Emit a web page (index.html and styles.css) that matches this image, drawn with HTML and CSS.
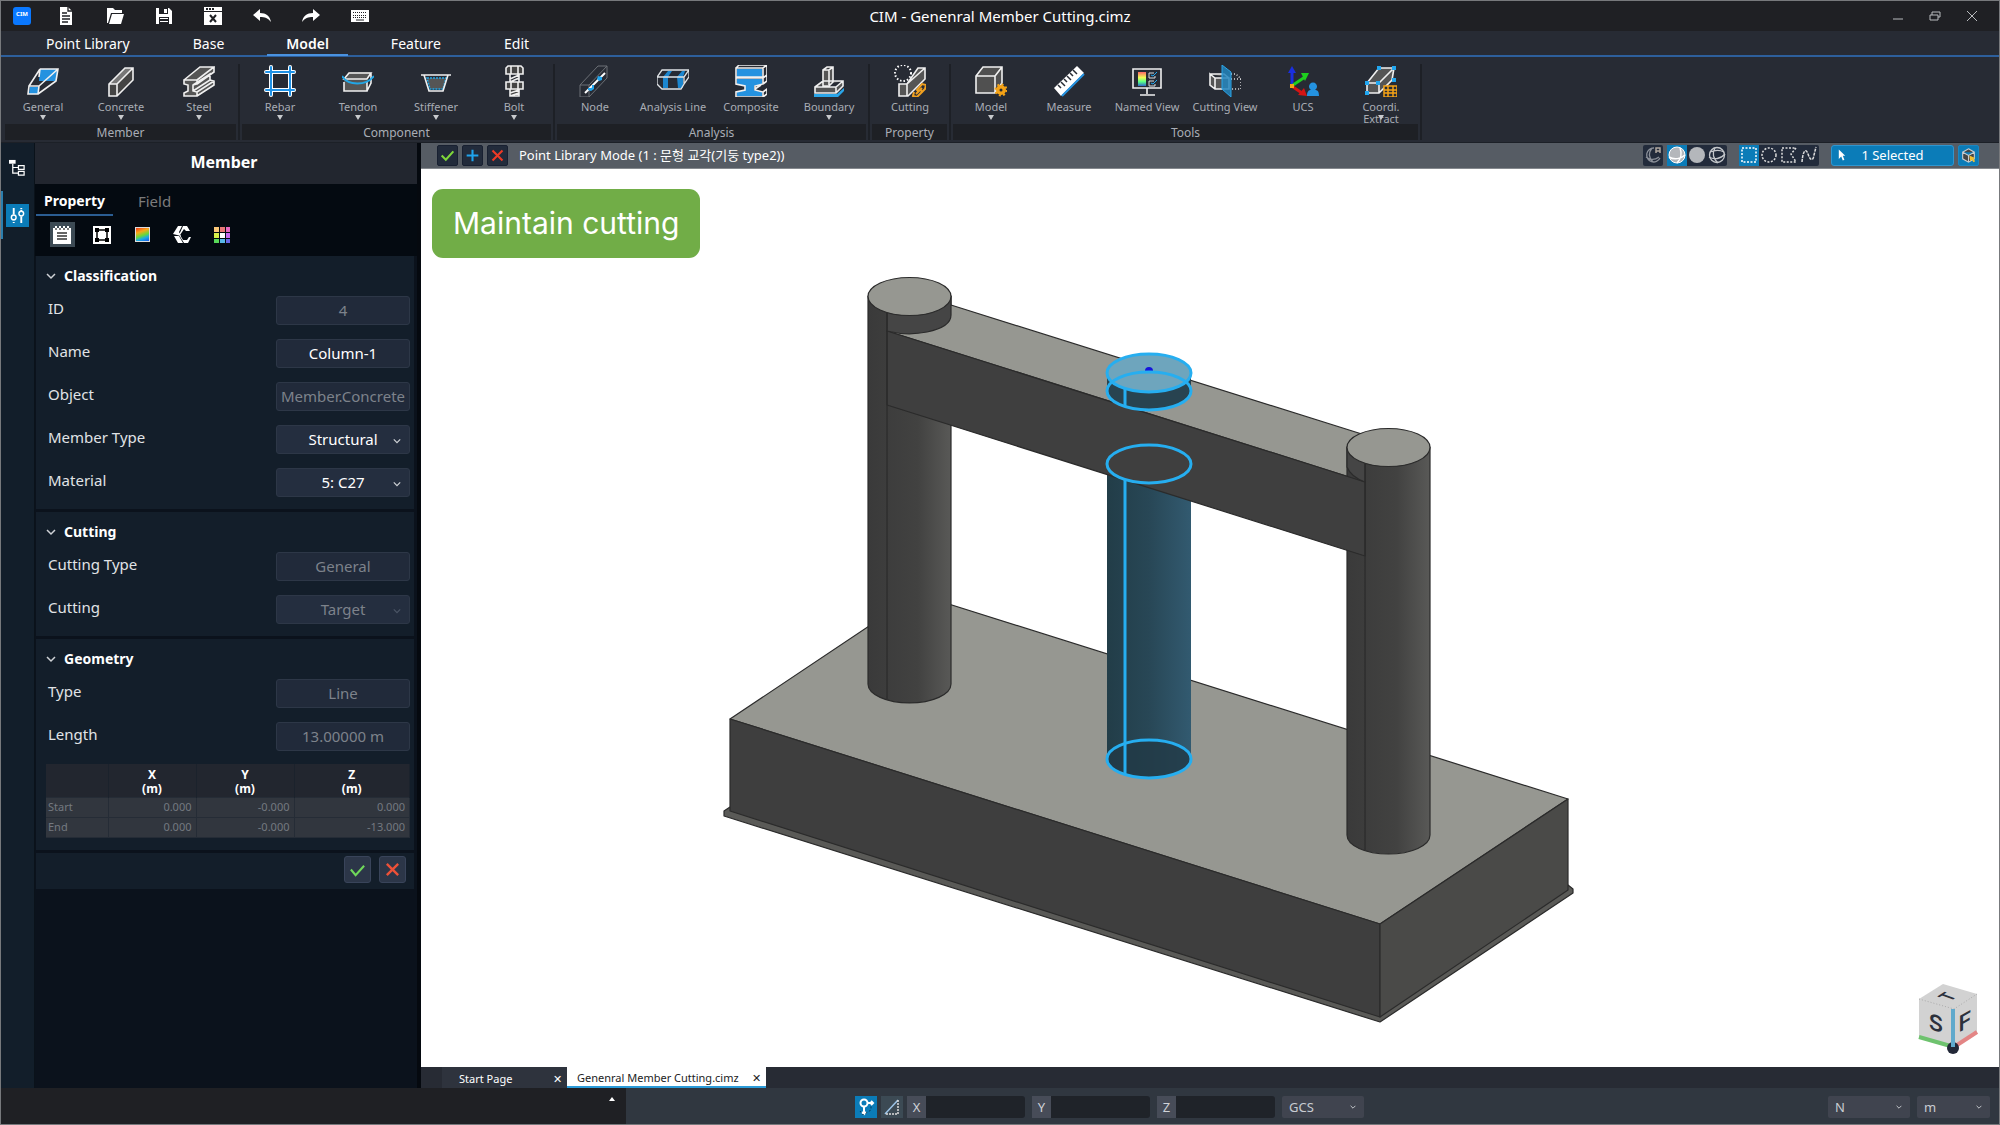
FILE: index.html
```html
<!DOCTYPE html>
<html lang="en">
<head>
<meta charset="UTF-8" />
<meta name="viewport" content="width=device-width, initial-scale=1" />
<title>CIM - Genenral Member Cutting.cimz</title>
<link rel="stylesheet" href="styles.css">
</head>
<body>
  <header class="titlebar">
    <div class="quick">
      <span class="logo">CIM</span>
      <button aria-label="New"><svg viewBox="0 0 18 18"><path fill="#fff" d="M3 0h8l4 4v14H3z"/><path stroke="#1f2024" stroke-width="1.3" d="M5 6h5M5 9h8M5 12h8M5 15h6M11 0v4h4"/></svg></button>
      <button aria-label="Open"><svg viewBox="0 0 18 18"><path fill="#fff" d="M1 1h6l2 2h7v3H5L2 16H1z"/><path fill="#fff" d="M6 7h12l-3 10H3z"/></svg></button>
      <button aria-label="Save"><svg viewBox="0 0 18 18"><path fill="#fff" d="M1 1h13l3 3v13H1z"/><path fill="#1f2024" d="M4 1h9v6H4zM4 10h10v7H4z"/><path fill="#fff" d="M9 2h3v4H9zM5 11h8v1H5zM5 14h8v1H5z"/></svg></button>
      <button aria-label="Close file"><svg viewBox="0 0 18 18"><path fill="#fff" d="M0 0h18v4H0zM0 5h18v13H0z"/><path stroke="#1f2024" stroke-width="2" d="M6 8l6 7M12 8l-6 7"/><path fill="#1f2024" d="M2 1h2v2H2zM5 1h2v2H5zM8 1h2v2H8z"/></svg></button>
      <button aria-label="Undo"><svg viewBox="0 0 18 18"><path fill="#fff" d="M0 8l7-6v4c6 0 10 3 11 9-3-4-6-5-11-5v4z"/></svg></button>
      <button aria-label="Redo"><svg viewBox="0 0 18 18"><path fill="#fff" d="M18 8l-7-6v4C5 6 1 9 0 15c3-4 6-5 11-5v4z"/></svg></button>
      <button aria-label="Keyboard"><svg viewBox="0 0 18 18"><path fill="#fff" d="M0 3h18v12H0z"/><path stroke="#1f2024" stroke-dasharray="1 1" d="M2 5.500h14M2 8.500h14M2 10.500h14"/><path stroke="#1f2024" d="M5 13h8"/></svg></button>
    </div>
    <h1>CIM - Genenral Member Cutting.cimz</h1>
    <div class="window-buttons">
      <button aria-label="Minimize"><svg viewBox="0 0 12 12"><path d="M1 9h10"/></svg></button>
      <button aria-label="Restore"><svg viewBox="0 0 12 12"><path d="M1 5h8v5H1zM3 5V2h8v5H9"/></svg></button>
      <button aria-label="Close"><svg viewBox="0 0 12 12"><path d="M1 1l10 10M11 1L1 11"/></svg></button>
    </div>
  </header>

  <nav class="menu">
    <a href="#">Point Library</a>
    <a href="#">Base</a>
    <a href="#" class="active">Model</a>
    <a href="#">Feature</a>
    <a href="#">Edit</a>
  </nav>

  <div class="ribbon">
    <section class="group">
      <div class="tools">
        <button class="tool drop"><svg viewBox="0 0 32 32"><path fill="#2492e0" d="M13 4h18l-2 12H12zM3 22h9l-1 7H2z"/><path class="w" d="M2 21h10l-1 8H1zM13 4h18l-2 12L11 29M2 21L13 4M12 21L31 4M13 4l-1 8"/></svg>General</button>
        <button class="tool drop"><svg viewBox="0 0 32 32"><path fill="#444" d="M4 19l16-16h8v12L12 31H4z"/><path fill="#777" d="M4 19L20 3h8L12 19z"/><path class="w" d="M4 19L20 3h8v12L12 31H4zM4 19h8v12M12 19L28 3"/></svg>Concrete</button>
        <button class="tool drop"><svg viewBox="0 0 32 32"><path fill="#555" d="M1 15L17 2h14v5l-4 2v6l4 1v4L14 31H1v-3l4-2v-6l-4-1z"/><path class="w" d="M1 15h13v4l-4 1v6l4 1v4H1v-3l4-2v-6l-4-1zM1 15L17 2h14L14 15M31 2v5L14 19M10 20l17-11v6L10 26M27 15l4 1v4L14 31M14 27l17-11"/></svg>Steel</button>
      </div>
      <h2>Member</h2>
    </section>
    <section class="group">
      <div class="tools">
        <button class="tool drop"><svg viewBox="0 0 32 32"><path stroke="#fff" stroke-width="4" stroke-linecap="round" d="M7 2v28M26 2v28M2 7h28M2 25h28"/><path stroke="#1f92e6" stroke-width="2" stroke-linecap="round" d="M7 2v28M26 2v28M2 7h28M2 25h28"/></svg>Rebar</button>
        <button class="tool drop"><svg viewBox="0 0 32 32"><path fill="#555" d="M2 14l5-7h22l-4 8v11H2z"/><path class="w" d="M2 14l5-6h22l-4 6zM2 17v9h23V16M29 8v10l-4 8"/><path stroke="#22a7e6" stroke-width="2" d="M0 11c6 10 24 10 32 0"/></svg>Tendon</button>
        <button class="tool drop"><svg viewBox="0 0 32 32"><path fill="#555" stroke="#22a7e6" stroke-width="1.500" stroke-dasharray="2 1" d="M7 13h19l-3 11H10z"/><path class="w" d="M1 10h30M4 10l5 16h14l5-16"/></svg>Stiffener</button>
        <button class="tool drop"><svg viewBox="0 0 32 32"><path fill="#444" class="w" d="M8 3l2-2h13l2 2v6H8zM8 17h17v7H8zM12 9v8M21 9v8M12 24v7h9v-7M12 14l9-4M12 17l9-4M12 28l9-3M12 31l9-3M13 1v8M20 1v8M13 17v7M20 17v7"/></svg>Bolt</button>
      </div>
      <h2>Component</h2>
    </section>
    <section class="group">
      <div class="tools">
        <button class="tool"><svg viewBox="0 0 32 32"><path stroke="#6c7076" d="M1 20L19 1h9v12L10 32H1zM1 20h9v12M10 20L28 1"/><path stroke="#fff" stroke-width="2" d="M6 28L26 8"/><path fill="#22a7f0" d="M9 23h4v-3h2v4l-3 2-3-1zM19 11l4 1v3l-3 1-2-2z"/></svg>Node</button>
        <button class="tool"><svg viewBox="0 0 32 32"><path fill="#1b86cf" d="M6 12l5-6h4l-4 6v11H6zM20 12l5-6h3l-2 6v11h-5z"/><path stroke="#dfe3e6" stroke-width="1.300" d="M0 12l5-7h27l-5 7v7l-3 5H5l-5-5zM0 12h27M32 5v7l-5 7"/></svg>Analysis Line</button>
        <button class="tool"><svg viewBox="0 0 32 32"><path fill="#2492e0" d="M2 4h25v8H2zM2 14h25v5l-8 2v4l8 2v4H2v-4l8-2v-4l-8-2z"/><path class="w" d="M1 3l3-3h28l-4 3H1v9h27V3M32 0v10l-4 3v6l-8 2v4l8 2v5H1v-5l9-2v-4l-9-2v-6h27M28 19l4-3v-5M20 24l6-4M28 27l4-3v5l-4 3"/></svg>Composite</button>
        <button class="tool drop"><svg viewBox="0 0 32 32"><path fill="#2aa5e8" d="M1 29h23l7-6v3l-6 6H1z"/><path fill="#555" class="w" d="M2 22l8-6h20v5l-7 7H2zM2 22h21l7-6M23 22v6M10 20V5l4-3h6v15l-4 4h-6zM10 5h6l4-3M16 5v15"/></svg>Boundary</button>
      </div>
      <h2>Analysis</h2>
    </section>
    <section class="group">
      <div class="tools">
        <button class="tool"><svg viewBox="0 0 32 32"><path fill="#555" class="w" d="M5 19h8L24 3h7v11L14 31H5zM13 19v12M13 19L31 3"/><circle cx="9" cy="8" r="8" fill="#272b34" stroke="#fff" stroke-width="2" stroke-dasharray="1.500 2"/><path stroke="#f0a020" stroke-width="2" d="M20 27l-1 4 4 1 5-5-2-3M25 27l-2-2 5-6 4 1-1 4-3 3M22 29l6-6"/></svg>Cutting</button>
      </div>
      <h2>Property</h2>
    </section>
    <section class="group">
      <div class="tools">
        <button class="tool drop"><svg viewBox="0 0 32 32"><path fill="#505050" class="w" d="M1 11l7-9h19v16l-7 10H1zM1 11h19v17M20 11l7-9"/><circle cx="26" cy="25" r="5" fill="#f5a316"/><circle cx="26" cy="25" r="5.500" stroke="#f5a316" stroke-width="2" stroke-dasharray="2 2.300"/><circle cx="26" cy="25" r="1.500" fill="#272b34"/></svg>Model</button>
        <button class="tool"><svg viewBox="0 0 32 32"><path fill="#fff" d="M1 23L24 1l7 7L8 31z"/><path stroke="#2492e0" stroke-width="2" d="M9 31L31 9"/><path stroke="#272b34" stroke-width="1.500" d="M5 20l3 3M8 17l4 4M11 14l3 3M14 11l4 4M17 8l3 3M20 5l4 4"/></svg>Measure</button>
        <button class="tool"><svg viewBox="0 0 32 32"><defs><linearGradient id="rainbow" x2="0" y2="1"><stop offset="0" stop-color="#f66"/><stop offset=".4" stop-color="#ef5"/><stop offset=".7" stop-color="#5f8"/><stop offset="1" stop-color="#36c"/></linearGradient></defs><path class="w" stroke-width="2" d="M2 4h28v19H2zM16 23v6M9 30h15"/><path fill="url(#rainbow)" d="M7 7h8v14H7z"/><path stroke="#ddd" d="M23 8h-5v5h6v-2M23 16h-5v5h6v-2"/><path stroke="#22a7f0" d="M20 10l2 1 4-4M20 18l2 1 4-4"/></svg>Named View</button>
        <button class="tool"><svg viewBox="0 0 32 32"><path fill="#555" class="w" d="M1 9l5 4h14v11H6l-5-4zM1 9h14l5 4M6 13v11"/><path stroke="#ddd" stroke-dasharray="1 2" stroke-width="1.500" d="M22 9h5l5 5v10H22M22 14h10"/><path fill="#2385bd" fill-opacity=".85" stroke="#2aa5e8" d="M13 0l9 7v25l-9-8z"/></svg>Cutting View</button>
        <button class="tool"><svg viewBox="0 0 32 32"><path stroke="#1a2fe0" stroke-width="3" d="M5 21V6"/><path fill="#1a2fe0" d="M1 8l4-7 4 7z"/><path stroke="#1ed01e" stroke-width="3" d="M6 20l12-8"/><path fill="#1ed01e" d="M14 8h8l-4 8z"/><path stroke="#d41414" stroke-width="3" d="M6 22l9 6"/><path fill="#d41414" d="M17 23l3 8-9-1z"/><path fill="#f5a316" d="M3 19h4v4H3z"/><path fill="#2492e0" d="M20 31c0-5 2-6 4-6a4 4 0 1 1 4 0c3 0 4 2 4 6z"/></svg>UCS</button>
        <button class="tool drop"><svg viewBox="0 0 32 32"><path fill="#555" class="w" d="M2 18L14 3h15l-2 12-13 13H2zM2 18h12v10M14 18L29 3"/><path fill="#22a7f0" d="M12 1h4v4h-4zM27 1h4v4h-4zM0 16h4v4H0zM11 16h4v4h-4zM0 26h4v4H0zM27 13h4v4h-4z"/><path fill="#272b34" stroke="#f5a316" stroke-width="1.500" d="M19 21h13v11H19zM19 25h13M19 28h13M23 21v11M28 21v11"/></svg>Coordi.<br>Extract</button>
      </div>
      <h2>Tools</h2>
    </section>
  </div>

  <main class="workspace">
    <div class="rail">
      <button aria-label="Tree"><svg viewBox="0 0 18 18"><path fill="#fff" d="M0 1h7v4H0z"/><path stroke="#fff" stroke-width="1.300" d="M4 5v10h6M4 9h6M10 7h6v4h-6zM10 13h6v4h-6z"/></svg></button>
      <button class="active" aria-label="Properties"><svg viewBox="0 0 18 18"><path stroke="#fff" stroke-width="2" d="M5 1v7M5 13v1M5 16v1M13 1v1M13 3v2M13 10v7"/><circle cx="5" cy="11" r="2.500" stroke="#fff" stroke-width="1.500"/><circle cx="13" cy="7" r="2.500" stroke="#fff" stroke-width="1.500"/></svg></button>
    </div>

    <aside class="panel">
      <h2 class="panel-title">Member</h2>
      <div class="panel-head">
        <div class="panel-tabs">
          <a href="#" class="active">Property</a>
          <a href="#">Field</a>
        </div>
        <div class="panel-icons">
          <button class="active" aria-label="General"><svg viewBox="0 0 18 18"><path fill="#fff" d="M0 2h18v16H0z"/><path stroke="#fff" stroke-width="2" d="M3 0v2M7 0v2M11 0v2M15 0v2"/><path stroke="#333" stroke-width="1.300" d="M4 7h10M4 10h10M4 13h10M3 2v2M7 2v2M11 2v2M15 2v2"/></svg></button>
          <button aria-label="Section"><svg viewBox="0 0 18 18"><path fill="#fff" d="M0 0h18v18H0z"/><path stroke="#000" stroke-width="1.500" d="M4 4h10v10H4z"/><path fill="#000" d="M2 2h4v4H2zM12 2h4v4h-4zM2 12h4v4H2zM12 12h4v4h-4z"/></svg></button>
          <button aria-label="Color"><span class="swatch"></span></button>
          <button aria-label="Shape"><svg viewBox="0 0 18 18"><path fill="#fff" d="M0 8l5-8h4L6 6l2 4zM1 10l4 7h5l-4-7zM10 0h4l3 5h-4l-2-2-4 6 3 5h4l2-3h2l-3 6h-4l-5-8z"/></svg></button>
          <button aria-label="Palette"><svg viewBox="0 0 18 18"><path fill="#fbc878" d="M1 1h5v5H1z"/><path fill="#e87878" d="M7 1h5v5H7z"/><path fill="#e868c0" d="M13 1h4v5h-4z"/><path fill="#d8f048" d="M1 7h5v5H1z"/><path fill="#fff" d="M7 7h5v5H7z"/><path fill="#c868f0" d="M13 7h4v5h-4z"/><path fill="#58d858" d="M1 13h5v4H1z"/><path fill="#58b8e8" d="M7 13h5v4H7z"/><path fill="#6868e8" d="M13 13h4v4h-4z"/></svg></button>
        </div>
      </div>

      <section class="props">
        <h3><svg viewBox="0 0 10 10"><path d="M1 3l4 4 4-4"/></svg>Classification</h3>
        <div class="row"><label for="id">ID</label><input id="id" value="4" disabled></div>
        <div class="row"><label for="name">Name</label><input id="name" value="Column-1"></div>
        <div class="row"><label for="object">Object</label><input id="object" value="Member.Concrete" disabled></div>
        <div class="row"><label for="mtype">Member Type</label><span class="select"><select id="mtype"><option>Structural</option></select><svg viewBox="0 0 10 10"><path d="M1 3l4 4 4-4"/></svg></span></div>
        <div class="row"><label for="material">Material</label><span class="select"><select id="material"><option>5: C27</option></select><svg viewBox="0 0 10 10"><path d="M1 3l4 4 4-4"/></svg></span></div>
      </section>
      <section class="props">
        <h3><svg viewBox="0 0 10 10"><path d="M1 3l4 4 4-4"/></svg>Cutting</h3>
        <div class="row"><label for="ctype">Cutting Type</label><input id="ctype" value="General" disabled></div>
        <div class="row"><label for="cutting">Cutting</label><span class="select off"><select id="cutting" disabled><option>Target</option></select><svg viewBox="0 0 10 10"><path d="M1 3l4 4 4-4"/></svg></span></div>
      </section>
      <section class="props">
        <h3><svg viewBox="0 0 10 10"><path d="M1 3l4 4 4-4"/></svg>Geometry</h3>
        <div class="row"><label for="gtype">Type</label><input id="gtype" value="Line" disabled></div>
        <div class="row"><label for="length">Length</label><input id="length" value="13.00000 m" disabled></div>
        <table>
          <thead>
            <tr><th></th><th>X<br>(m)</th><th>Y<br>(m)</th><th>Z<br>(m)</th></tr>
          </thead>
          <tbody>
            <tr><td>Start</td><td>0.000</td><td>-0.000</td><td>0.000</td></tr>
            <tr><td>End</td><td>0.000</td><td>-0.000</td><td>-13.000</td></tr>
          </tbody>
        </table>
      </section>
      <div class="confirm">
        <button aria-label="Apply"><svg viewBox="0 0 18 18"><path stroke="#6fd85a" stroke-width="2.200" d="M2 9l5 6 9-10"/></svg></button>
        <button aria-label="Cancel"><svg viewBox="0 0 18 18"><path stroke="#ee5138" stroke-width="2.500" d="M3 3l12 12M15 3L3 15"/></svg></button>
      </div>
    </aside>

    <div class="view">
      <div class="viewbar">
        <button class="sq" aria-label="Apply"><svg viewBox="0 0 18 18"><path stroke="#7fd83a" stroke-width="2.500" d="M2 9l5 5 9-10"/></svg></button>
        <button class="sq" aria-label="Add"><svg viewBox="0 0 18 18"><path stroke="#1fa4ee" stroke-width="2.500" d="M9 2v14M2 9h14"/></svg></button>
        <button class="sq" aria-label="Cancel"><svg viewBox="0 0 18 18"><path stroke="#ee3a26" stroke-width="2.500" d="M3 3l12 12M15 3L3 15"/></svg></button>
        <span class="mode">Point Library Mode (1 : 문형 교각(기둥 type2))</span>
        <div class="set">
          <button aria-label="Auto"><svg viewBox="0 0 18 18"><path stroke="#8b9099" stroke-width="1.300" d="M10 2a7 7 0 1 0 6 10M2 11c4 3 9 3 13 0M8 2c-4 5-3 10 1 14"/><path stroke="#b0a8a0" stroke-width="1.500" d="M12 7V2h4v5M12 5h4"/></svg></button>
        </div>
        <div class="set">
          <button class="active" aria-label="Shaded"><svg viewBox="0 0 18 18"><circle cx="9" cy="9" r="8" fill="#b4b7bb" stroke="#fff"/><path stroke="#fff" stroke-width="1.500" d="M1 11c5 3 12 2 16-2M12 2c2 5 1 11-3 15"/></svg></button>
          <button aria-label="Solid"><svg viewBox="0 0 18 18"><circle cx="9" cy="9" r="8" fill="#b4b7bb"/></svg></button>
          <button aria-label="Wire"><svg viewBox="0 0 18 18"><circle cx="9" cy="9" r="7.500" stroke="#c4c7cb" stroke-width="1.300"/><path stroke="#c4c7cb" stroke-width="1.300" d="M1 11c5 3 12 2 16-3M7 2c-3 5-2 11 3 15M2 6c5-2 10-2 14 0"/></svg></button>
        </div>
        <div class="set picks">
          <button class="active" aria-label="Box select"><svg viewBox="0 0 18 18"><path stroke="#fff" stroke-width="1.500" stroke-dasharray="2 1.500" d="M2 2h14v14H2z"/></svg></button>
          <button aria-label="Circle select"><svg viewBox="0 0 18 18"><circle cx="9" cy="9" r="7" stroke="#ddd" stroke-width="1.500" stroke-dasharray="2 1.500"/></svg></button>
          <button aria-label="Polygon select"><svg viewBox="0 0 18 18"><path stroke="#ddd" stroke-width="1.500" stroke-dasharray="2 1.500" d="M2 2h14l-5 6 5 8H2z"/></svg></button>
          <button aria-label="Free select"><svg viewBox="0 0 18 18"><path stroke="#ddd" stroke-width="1.500" stroke-dasharray="3 1" d="M2 16C3 4 6 2 8 8s5 8 6 1l2-8"/></svg></button>
        </div>
        <button class="selected"><svg viewBox="0 0 10 14"><path fill="#fff" d="M1 0l8 8H6l2 5-2 1-2-5-3 3z"/></svg><span>1 Selected</span></button>
        <button class="sq cube-btn" aria-label="View cube"><svg viewBox="0 0 18 18"><path fill="#444" stroke="#c8ccd0" stroke-width="1.300" d="M9 1l7 4v8l-7 4-7-4V5zM2 5l7 4 7-4M9 9v8"/><path fill="#f0c030" d="M10 9l7 3-2 1 2 3-2 1-2-3-2 2z"/></svg></button>
      </div>

      <div class="canvas">
        <svg class="scene" viewBox="421 169 1578 898" preserveAspectRatio="xMidYMid meet">
          <defs>
            <linearGradient id="col"><stop offset="0" stop-color="#3a3a3a"/><stop offset=".6" stop-color="#424241"/><stop offset="1" stop-color="#595957"/></linearGradient>
            <linearGradient id="sel"><stop offset="0" stop-color="#223d48"/><stop offset=".5" stop-color="#284756"/><stop offset="1" stop-color="#325a70"/></linearGradient>
          </defs>
          <g stroke="#2b2b2b" stroke-width="1.200" stroke-linejoin="round">
            <!-- footing -->
            <path fill="#5a5a57" d="M724 811l6-4 650 205 188-127 5 4v4l-193 129-656-206z"/>
            <path fill="#969791" d="M730 719L917 594l651 205-188 125z"/>
            <path fill="#3e3e3e" d="M730 719l650 205v93L730 811z"/>
            <path fill="#4a4a48" d="M1380 924l188-125v91l-188 127z"/>
            <!-- left column -->
            <path fill="url(#col)" d="M868 296v388a41.500 19 0 0 0 83 0V296z"/>
            <!-- middle column -->
            <path fill="url(#sel)" stroke="none" d="M1107 464v295a42 19 0 0 0 84 0V464z"/>
            <path fill="#223a46" fill-opacity=".8" stroke="none" d="M1107 759a42 19 0 0 0 84 0a42 19 0 0 0-84 0z"/>
            <!-- beam top goes behind the right column -->
            <path fill="#969791" d="M887 331l64-26 414 130v47z"/>
            <!-- right column -->
            <path fill="url(#col)" d="M1347 447v388a41.500 19 0 0 0 83 0V447z"/>
            <!-- beam -->
            <path fill="#3f3f3f" d="M887 331l478 151v74L887 405z"/>
            <path fill="#454545" d="M887 331q20 5 40 1q24-5 24-17V296h-64z"/>
            <path fill="#454545" d="M1347 447v20q4 10 18 15v-30z"/>
            <path fill="none" d="M887 311v388M1365 464v386"/>
            <ellipse cx="909.500" cy="296.500" rx="41.500" ry="19" fill="#969791"/>
            <ellipse cx="1388.500" cy="447.500" rx="41.500" ry="19" fill="#969791"/>
          </g>
          <!-- selection outline -->
          <path fill="#284350" d="M1107 373v18a42 19 0 0 0 84 0v-18z"/>
          <ellipse cx="1149" cy="373" rx="42" ry="19" fill="#6ea5bd"/>
          <circle cx="1149" cy="371" r="4" fill="#1414dc"/>
          <path fill="#6ea5bd" d="M1144 371h10v5h-10z"/>
          <g fill="none" stroke="#26aef0" stroke-width="3">
            <ellipse cx="1149" cy="373" rx="42" ry="19"/>
            <ellipse cx="1149" cy="391" rx="42" ry="19"/>
            <ellipse cx="1149" cy="464" rx="42" ry="19"/>
            <ellipse cx="1149" cy="759" rx="42" ry="19"/>
            <path d="M1125 389v18M1125 480v294"/>
          </g>
        </svg>
        <div class="banner">Maintain cutting</div>
        <svg class="viewcube" viewBox="0 0 62 74">
          <path fill="#d2d2d2" d="M1 16L25 1l34 10v38L36 65 1 54z"/>
          <path stroke="#aaa" stroke-dasharray="1 2" d="M1 16l35 10 23-15"/>
          <path stroke="#6ec26e" stroke-width="4" d="M1 54l35 10"/>
          <path stroke="#e38585" stroke-width="4" d="M36 64l23-15"/>
          <circle cx="35" cy="65" r="6" fill="#222838"/>
          <path stroke="#5fa9cc" stroke-width="4" d="M35 26v38"/>
          <text transform="translate(18 48) skewY(16)">S</text>
          <text transform="translate(47 46) skewY(-30)">F</text>
          <text class="top" transform="translate(36 16) rotate(-32) skewX(38)">T</text>
        </svg>
      </div>

      <div class="doctabs">
        <div class="doctab"><a href="#">Start Page</a><button aria-label="Close Start Page">✕</button></div>
        <div class="doctab active"><a href="#">Genenral Member Cutting.cimz</a><button aria-label="Close file">✕</button></div>
      </div>
    </div>
  </main>

  <footer class="status">
    <div class="message"><span class="up"></span></div>
    <div class="coords">
      <button class="snap active" aria-label="Snap"><svg viewBox="0 0 18 18"><circle cx="7" cy="5" r="3.500" stroke="#fff" stroke-width="2"/><path stroke="#fff" stroke-width="2" d="M7 9v7M10 5h6M14 3l2 2-2 2M5 14l2 2 2-2"/><path stroke="#083a58" stroke-dasharray="2 2" d="M3 13l3 4 8-5V8"/></svg></button>
      <button class="snap" aria-label="Angle"><svg viewBox="0 0 18 18"><path stroke="#9cc4e8" stroke-width="1.500" d="M2 16L15 2"/><path stroke="#ddd" stroke-width="1.500" stroke-dasharray="2 1" d="M15 2v14H2"/></svg></button>
      <div class="coord"><label for="x">X</label><input id="x"></div>
      <div class="coord"><label for="y">Y</label><input id="y"></div>
      <div class="coord"><label for="z">Z</label><input id="z"></div>
      <span class="select gcs"><select aria-label="Coordinate system"><option>GCS</option></select><svg viewBox="0 0 10 10"><path d="M1 3l4 4 4-4"/></svg></span>
    </div>
    <div class="units">
      <span class="select force"><select aria-label="Force unit"><option>N</option></select><svg viewBox="0 0 10 10"><path d="M1 3l4 4 4-4"/></svg></span>
      <span class="select len"><select aria-label="Length unit"><option>m</option></select><svg viewBox="0 0 10 10"><path d="M1 3l4 4 4-4"/></svg></span>
    </div>
  </footer>
</body>
</html>
```
FILE: styles.css
```css
* {
  box-sizing: border-box;
}
body {
  margin: 0;
  height: 100vh;
  display: flex;
  flex-direction: column;
  border: 1px solid #77797c;
  background: #272b34;
  color: #fff;
  font-family: "Noto Sans", "Noto Sans CJK KR", sans-serif;
  font-size: 14px;
  overflow: hidden;
}
h1, h2, h3 {
  margin: 0;
  font-weight: 400;
}
a {
  color: inherit;
  text-decoration: none;
}
button, input, select {
  font: inherit;
  color: inherit;
  border: none;
  margin: 0;
  padding: 0;
  background: none;
}
svg {
  display: block;
  fill: none;
}

/* title bar */
.titlebar {
  display: grid;
  grid-template-columns: 1fr auto 1fr;
  align-items: center;
  height: 30px;
  background: #1f2024;
}
.titlebar h1 {
  font-size: 15px;
}
.quick {
  display: flex;
  align-items: center;
}
.logo {
  width: 18px;
  height: 18px;
  margin: 0 10px 0 12px;
  border-radius: 3px;
  background: #0a78ff;
  font-size: 6px;
  line-height: 14px;
  font-weight: 700;
  text-align: center;
}
.quick button {
  width: 49px;
}
.quick svg {
  width: 18px;
  height: 18px;
  margin: 0 auto;
}
.window-buttons {
  display: flex;
  justify-content: flex-end;
  padding-right: 9px;
}
.window-buttons button {
  width: 37px;
}
.window-buttons svg {
  width: 12px;
  height: 12px;
  margin: 0 auto;
  stroke: #b9bbbe;
}

/* menu */
.menu {
  display: flex;
  gap: 23px;
  height: 26px;
  padding-left: 25px;
  border-bottom: 2px solid #2d5f9c;
}
.menu a {
  padding: 0 20px;
  font-size: 14px;
  line-height: 26px;
  height: 25px;
}
.menu .active {
  padding: 0 19px;
  font-weight: 600;
  border-bottom: 2px solid #4a92e0;
}

/* ribbon */
.ribbon {
  display: flex;
  height: 86px;
  padding: 7px 0 2px 3px;
  border-bottom: 1px solid #1c2027;
}
.group {
  border-right: 2px solid #1d2026;
  margin-right: 1px;
}
.tools {
  display: flex;
  height: 60px;
}
.tool {
  position: relative;
  width: 78px;
  height: 60px;
  display: flex;
  flex-direction: column;
  align-items: center;
  color: #a9adb5;
  font-size: 11px;
  line-height: 12px;
  padding-top: 1px;
}
.tool svg {
  width: 32px;
  height: 32px;
  flex: none;
  margin-bottom: 4px;
}
.tool .w {
  stroke: #f0f0f0;
  stroke-width: 1.6;
}
.drop::after {
  content: "";
  position: absolute;
  left: 36px;
  top: 51px;
  border: 3px solid transparent;
  border-top: 5px solid #c8cacd;
  border-bottom: 0;
}
.group h2 {
  height: 16px;
  margin: 0 2px 0 1px;
  background: #1e2025;
  color: #a9adb5;
  font-size: 12px;
  line-height: 17px;
  text-align: center;
}

/* workspace */
.workspace {
  flex: 1;
  min-height: 0;
  display: flex;
}
.rail {
  width: 33px;
  background: #121e2a;
}
.rail button {
  display: flex;
  align-items: center;
  width: 33px;
  height: 48px;
  padding-left: 5px;
}
.rail svg {
  width: 23px;
  height: 23px;
  padding: 3px;
}
.rail .active {
  padding-left: 3px;
  border-left: 2px solid #2b7fae;
}
.rail .active svg {
  background: #0b7cb8;
}
.panel {
  width: 387px;
  background: #0b121c;
  border-left: 1px solid #0a121a;
  border-right: 4px solid #05090f;
}
.panel-title {
  height: 41px;
  padding-right: 4px;
  background: #22262f;
  font-size: 16px;
  font-weight: 700;
  line-height: 38px;
  text-align: center;
}
.panel-head {
  height: 72px;
  padding: 4px 0 0 1px;
  background: #040a11;
}
.panel-tabs {
  display: flex;
  gap: 17px;
  font-size: 15px;
  line-height: 26px;
}
.panel-tabs a {
  padding: 0 8px;
  color: #7b7b7b;
}
.panel-tabs .active {
  color: #fff;
  font-size: 14px;
  font-weight: 700;
  border-bottom: 2px solid #2b5d92;
}
.panel-icons {
  display: flex;
  gap: 15px;
  padding: 6px 14px;
}
.panel-icons button {
  width: 25px;
  height: 25px;
  padding: 3px;
}
.panel-icons svg {
  width: 18px;
  height: 18px;
}
.panel-icons .active {
  background: #3c4a54;
}
.swatch {
  display: block;
  width: 15px;
  height: 15px;
  margin-left: 2px;
  border: 1px solid #ddd;
  background: linear-gradient(160deg, #f03818, #f8a818 30%, #68d838 55%, #18a8e8 75%, #1858e8);
}
.props {
  margin: 0 3px 3px 1px;
  padding: 8px 4px 12px 10px;
  background: #131e2a;
}
.props h3 {
  display: flex;
  align-items: center;
  gap: 8px;
  margin-bottom: 8px;
  font-size: 14px;
  font-weight: 700;
  line-height: 24px;
}
.props h3 svg, .select svg {
  width: 10px;
  height: 10px;
  stroke: #cfd2d6;
  stroke-width: 1.5;
}
.row {
  display: flex;
  justify-content: space-between;
  margin-top: 14px;
}
h3 + .row {
  margin-top: 0;
}
.row label {
  padding-left: 2px;
  color: #e0e3e6;
  font-size: 15px;
  line-height: 24px;
}
.row input, .row .select {
  width: 134px;
  height: 29px;
  border: 1px solid #2d3747;
  border-radius: 3px;
  background: #212a3a;
  font-size: 15px;
  text-align: center;
}
.row input, .row select {
  padding-bottom: 2px;
}
.row .select {
  background: #242e3f;
}
input:disabled, select:disabled {
  color: #7d828b;
  opacity: 1;
}
.select {
  position: relative;
  display: block;
}
.select select {
  appearance: none;
  width: 100%;
  height: 100%;
  text-align-last: center;
}
.select svg {
  position: absolute;
  right: 8px;
  top: 50%;
  width: 8px;
  height: 8px;
  margin-top: -3px;
  pointer-events: none;
}
.off svg {
  stroke: #4b5566;
}
table {
  width: 100%;
  margin-top: 13px;
  border-collapse: collapse;
  table-layout: fixed;
  font-size: 11px;
}
th {
  height: 33px;
  padding: 3px 0 0;
  background: #22262f;
  border-right: 1px solid #1b222c;
  font-size: 12px;
  line-height: 14px;
}
th:nth-child(1) { width: 62px; }
th:nth-child(2) { width: 88px; }
th:nth-child(3) { width: 98px; }
td {
  height: 20px;
  padding: 0 4px;
  background: #31363e;
  border: 1px solid #252c36;
  border-left: none;
  color: #747980;
  line-height: 18px;
  text-align: right;
}
td:first-child {
  padding-left: 2px;
  text-align: left;
}
.confirm {
  display: flex;
  justify-content: flex-end;
  gap: 8px;
  margin: 0 3px 0 1px;
  padding: 3px 8px 6px;
  background: #131e2a;
}
.confirm button {
  width: 27px;
  height: 27px;
  padding: 4px;
  border: 1px solid #39445a;
  border-radius: 3px;
  background: #2c3648;
}

/* 3d view */
.view {
  flex: 1;
  min-width: 0;
  display: flex;
  flex-direction: column;
}
.viewbar {
  display: flex;
  align-items: center;
  height: 26px;
  padding: 0 20px 1px 16px;
  gap: 4px;
  background: #565c64;
  border-bottom: 1px solid #85898e;
}
.sq, .set {
  height: 21px;
  border-radius: 2px;
  background: #222b3b;
}
.sq {
  width: 21px;
  padding: 2px;
  border: 1px solid #182031;
}
.mode {
  flex: 1;
  padding-left: 7px;
  font-size: 13px;
  line-height: 22px;
}
.set {
  display: flex;
}
.set button {
  width: 20px;
  height: 21px;
  padding: 1px;
}
.set .active {
  background: #0b7cb8;
}
.picks {
  margin: 0 8px;
}
.selected {
  display: flex;
  align-items: center;
  width: 123px;
  height: 21px;
  padding: 0 14px 0 6px;
  border: 1px solid #2e96d0;
  border-radius: 3px;
  background: #0b7cb8;
  font-size: 13px;
  line-height: 17px;
}
.selected svg {
  width: 8px;
  height: 12px;
}
.selected span {
  flex: 1;
}
.cube-btn {
  background: #0b7cb8;
  border-color: #1c86c0;
}
.canvas {
  position: relative;
  flex: 1;
  min-height: 0;
  background: #fff;
}
.scene {
  width: 100%;
  height: 100%;
}
.banner {
  position: absolute;
  left: 11px;
  top: 20px;
  padding: 0 21px;
  border-radius: 11px;
  background: #71ad47;
  font-family: Inter, sans-serif;
  font-size: 30px;
  line-height: 69px;
}
.viewcube {
  position: absolute;
  right: 19px;
  bottom: 10px;
  width: 62px;
  height: 74px;
}
.viewcube text {
  fill: #2c313c;
  font-family: Inter, sans-serif;
  font-size: 22px;
  font-weight: 600;
  text-anchor: middle;
}
.viewcube .top {
  font-size: 15px;
}
.doctabs {
  display: flex;
  height: 21px;
  padding-left: 21px;
  background: #272b34;
}
.doctab {
  display: flex;
  align-items: center;
  justify-content: space-between;
  width: 125px;
  padding: 1px 5px 0 17px;
  background: #2e333d;
  font-size: 11px;
}
.doctab.active {
  width: 199px;
  padding: 2px 5px 0 10px;
  background: #fff;
  color: #222;
  border-bottom: 2px solid #2b9bd8;
}

/* status bar */
.status {
  display: flex;
  align-items: center;
  height: 36px;
  background: #303740;
}
.message {
  width: 625px;
  height: 36px;
  background: #1f2024;
  padding: 9px 11px;
}
.up {
  display: block;
  width: 6px;
  margin-left: auto;
  border: 3px solid transparent;
  border-top: 0;
  border-bottom: 4px solid #fff;
}
.coords {
  display: flex;
  gap: 4px;
  margin-left: 229px;
  padding-top: 2px;
}
.snap {
  width: 22px;
  height: 22px;
  padding: 2px;
  background: #3c4a54;
}
.snap.active {
  background: #0b7cb8;
}
.coord {
  display: flex;
  margin-right: 3px;
}
.coord label {
  width: 19px;
  background: #474c58;
  color: #d0d3d8;
  font-size: 13px;
  line-height: 22px;
  text-align: center;
}
.coord input {
  width: 99px;
  background: #1f2329;
  border-radius: 0 3px 3px 0;
}
.status .select {
  height: 22px;
  border-radius: 2px;
  background: #40444f;
  color: #c8ccd2;
  font-size: 13px;
}
.status .select svg {
  width: 6px;
  height: 6px;
}
.status select {
  padding-left: 7px;
  text-align-last: left;
}
.status .gcs, .status .force {
  width: 82px;
}
.status .len {
  width: 73px;
}
.units {
  display: flex;
  gap: 7px;
  margin-left: auto;
  padding: 2px 9px 0 0;
}
```
